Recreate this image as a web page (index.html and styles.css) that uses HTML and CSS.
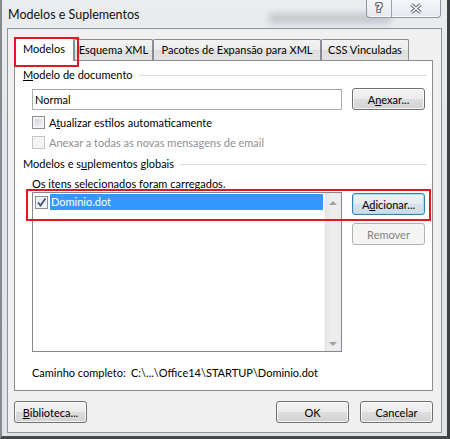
FILE: index.html
```html
<!DOCTYPE html>
<html lang="pt">
<head>
<meta charset="utf-8">
<title>Modelos e Suplementos</title>
<link rel="stylesheet" href="styles.css">
</head>
<body>
<div class="window">
  <div class="titlebar">
    <span class="title">Modelos e Suplementos</span>
    <div class="glass-blur"></div>
    <div class="caption-btns">
      <div class="cap help"><span class="q">?</span></div>
      <div class="cap close">
        <svg width="14" height="11" viewBox="0 0 14 11">
          <path d="M2.5 1.5 L11.5 9.5 M11.5 1.5 L2.5 9.5" stroke="#5e6772" stroke-width="3.4" fill="none"/>
          <path d="M2.5 1.5 L11.5 9.5 M11.5 1.5 L2.5 9.5" stroke="#ffffff" stroke-width="1.4" fill="none"/>
        </svg>
      </div>
    </div>
  </div>
  <div class="client">
    <div class="tabs">
      <div class="tab selected w-mod">Modelos</div>
      <div class="tab w-esq">Esquema XML</div>
      <div class="tab w-pac">Pacotes de Expansão para XML</div>
      <div class="tab w-css">CSS Vinculadas</div>
    </div>
    <div class="panel">
      <div class="group-header h1"><span><u>M</u>odelo de documento</span><i class="rule"></i></div>
      <div class="docrow">
        <div class="textbox">Normal</div>
        <button class="btn">A<u>n</u>exar...</button>
      </div>
      <div class="check-row r1"><span class="chk"></span><span>A<u>t</u>ualizar estilos automaticamente</span></div>
      <div class="check-row disabled"><span class="chk"></span><span>Anexar a todas as novas mensagens de email</span></div>
      <div class="group-header h2"><span>Modelos e s<u>u</u>plementos globais</span><i class="rule"></i></div>
      <div class="note">Os itens selecionados foram carregados.</div>
      <div class="listrow">
        <div class="listbox">
          <div class="items">
            <div class="item">
              <span class="chk checked">
                <svg width="11" height="11" viewBox="0 0 11 11"><path d="M2 5.5 L4.5 8.5 L9.5 1.5" stroke="#3d4f7c" stroke-width="1.8" fill="none"/></svg>
              </span>
              <span class="sel">Dominio.dot</span>
            </div>
          </div>
          <div class="scrollbar">
            <span class="sbtn"><i class="arrow up"></i></span>
            <span class="sbtn"><i class="arrow down"></i></span>
          </div>
        </div>
        <div class="side-btns">
          <button class="btn default">A<u>d</u>icionar...</button>
          <button class="btn disabled">Remover</button>
        </div>
        <div class="callout"></div>
      </div>
      <div class="path"><span class="path-label">Caminho completo:</span><span class="path-val">C:\...\Office14\STARTUP\Dominio.dot</span></div>
    </div>
    <div class="footer">
      <button class="btn"><u>B</u>iblioteca...</button>
      <button class="btn ok">OK</button>
      <button class="btn">Cancelar</button>
    </div>
  </div>
</div>
</body>
</html>
```

FILE: styles.css
```css
* { box-sizing: border-box; }
html, body { margin: 0; padding: 0; background: #4a4a4a; }
body {
  font-family: Lato, "Liberation Sans", sans-serif;
  font-size: 11px;
  color: #000;
}
u { text-underline-offset: 1px; }

.window {
  position: relative;
  width: 450px;
  height: 439px;
  display: flex;
  flex-direction: column;
  border-left: 2px solid #868a8e;
  border-right: 3px solid #3d3f42;
  border-bottom: 3px solid #46484a;
  background: linear-gradient(180deg, #e9edf0 0%, #e0e5e9 40%, #dfe4e8 100%);
}

.titlebar {
  position: relative;
  height: 28px;
  display: flex;
  align-items: flex-start;
  padding-left: 6px;
}
.title {
  margin-top: 7px;
  line-height: 16px;
  font-size: 12.5px;
  color: #111;
}
.glass-blur {
  position: absolute;
  left: 266px;
  top: 13px;
  width: 124px;
  height: 11px;
  border-radius: 6px;
  background: rgba(110, 115, 120, 0.28);
  filter: blur(3px);
}
.caption-btns {
  margin-left: auto;
  margin-right: 6px;
  margin-top: -1px;
  display: flex;
  height: 19px;
  border: 1px solid #8a95a1;
  border-top: none;
  border-radius: 0 0 4px 4px;
  background: linear-gradient(180deg, #f6f8fa, #e4e9ee);
  box-shadow: inset 0 -1px 0 rgba(255,255,255,0.8);
  position: relative;
  z-index: 1;
}
.cap {
  display: flex;
  align-items: center;
  justify-content: center;
}
.help {
  width: 25px;
  border-right: 1px solid #9aa4ae;
}
.close { width: 48px; }
.q {
  font-family: "DejaVu Sans", sans-serif;
  font-weight: bold;
  font-size: 12px;
  color: #fff;
  line-height: 14px;
  text-shadow: 1px 0 #5e6772, -1px 0 #5e6772, 0 1px #5e6772, 0 -1px #5e6772,
               1px 1px #5e6772, -1px -1px #5e6772, 1px -1px #5e6772, -1px 1px #5e6772;
}

.client {
  margin: 0 5px;
  height: 405px;
  border: 1px solid #8d9297;
  background: #f0f0f0;
  padding: 8px 8px 0 6px;
  display: flex;
  flex-direction: column;
}

.tabs {
  display: flex;
  align-items: flex-end;
  height: 23px;
}
.tab {
  height: 21px;
  border: 1px solid #898c95;
  border-bottom: none;
  border-radius: 2px 2px 0 0;
  text-align: center;
  line-height: 20px;
  white-space: nowrap;
  background: linear-gradient(180deg, #f3f3f3 0%, #ebebeb 50%, #dedede 51%, #e3e3e3 100%);
}
.tab.selected {
  position: relative;
  z-index: 1;
  height: 24px;
  margin-bottom: -1px;
  line-height: 22px;
  background: #fff;
}
.tab.selected::after {
  content: "";
  position: absolute;
  left: -1px;
  top: -1px;
  width: 61px;
  height: 26px;
  border: 2px solid #e5161d;
}
.w-mod { width: 60px; }
.w-esq { width: 79px; }
.w-pac { width: 168px; }
.w-css { width: 88px; }

.panel {
  width: 419px;
  height: 331px;
  border: 1px solid #898c95;
  background: #fff;
  display: flex;
  flex-direction: column;
}

.group-header {
  display: flex;
  align-items: center;
  gap: 6px;
  height: 16px;
  line-height: 16px;
  padding: 0 5px 0 8px;
}
.group-header.h1 { margin-top: 6px; }
.group-header.h2 { margin-top: 4px; }
.rule {
  flex: 1;
  height: 1px;
  background: #d5dfe5;
}

.docrow {
  display: flex;
  align-items: flex-start;
  gap: 10px;
  margin-top: 5px;
  padding-left: 17px;
  height: 22px;
}
.textbox {
  width: 310px;
  height: 21px;
  margin-top: 1px;
  border: 1px solid #abadb3;
  border-top-color: #9da2aa;
  padding-left: 2px;
  line-height: 19px;
  background: #fff;
}

.btn {
  width: 73px;
  height: 22px;
  padding: 0;
  font: inherit;
  color: #000;
  border: 1px solid #707070;
  border-radius: 3px;
  background: linear-gradient(180deg, #f3f3f3 0%, #ebebeb 50%, #dddddd 51%, #d2d2d2 100%);
  box-shadow: inset 0 0 0 1px rgba(255,255,255,0.75);
  line-height: 19px;
  text-align: center;
}
.btn.default {
  border-color: #3c7fb1;
  box-shadow: inset 0 0 0 1px #a9dcf5;
  background: linear-gradient(180deg, #edf3f7 0%, #e3ebf1 50%, #d5e2eb 51%, #cddbe6 100%);
}
.btn.disabled {
  border-color: #adb2b5;
  background: #f4f4f4;
  box-shadow: none;
  color: #838383;
}

.check-row {
  display: flex;
  align-items: center;
  gap: 4px;
  height: 20px;
  padding-left: 17px;
}
.check-row.r1 { margin-top: 2px; }
.chk {
  display: inline-flex;
  align-items: center;
  justify-content: center;
  width: 13px;
  height: 13px;
  flex: none;
  border: 1px solid #8e8f8f;
  background: linear-gradient(135deg, #c9cdd3 0%, #e3e5e8 55%, #f7f7f7 100%);
  box-shadow: inset 0 0 0 1px #f4f4f4, inset 0 0 0 2px #f0f0f0;
}
.check-row.disabled { color: #8f8f8f; }
.check-row.disabled .chk {
  border-color: #c5c5c5;
  background: #f4f4f4;
  box-shadow: none;
}

.note {
  margin-top: 4px;
  padding-left: 17px;
  line-height: 16px;
}

.listrow {
  position: relative;
  display: flex;
  gap: 10px;
  padding-left: 17px;
  height: 160px;
}
.listbox {
  width: 310px;
  height: 160px;
  border: 1px solid #828790;
  display: flex;
  background: #fff;
}
.items {
  flex: 1;
  padding-top: 1px;
}
.item {
  display: flex;
  align-items: center;
  height: 16px;
  padding-left: 2px;
}
.chk.checked {
  margin-right: 2px;
  background: linear-gradient(135deg, #dfe2e6 0%, #f3f4f5 60%, #fafafa 100%);
}
.sel {
  flex: 1;
  margin-right: 1px;
  height: 16px;
  line-height: 16px;
  padding-left: 1px;
  background: #3399ff;
  color: #fff;
}
.scrollbar {
  width: 17px;
  display: flex;
  flex-direction: column;
  justify-content: space-between;
  background: linear-gradient(90deg, #e6e6e6, #eeeeee 40%, #ebebeb);
  border-left: 1px solid #f2f2f2;
}
.sbtn {
  height: 16px;
  display: flex;
  align-items: center;
  justify-content: center;
}
.arrow {
  width: 0;
  height: 0;
  border-left: 4px solid transparent;
  border-right: 4px solid transparent;
}
.arrow.up { border-bottom: 4px solid #a2a2a2; margin-top: 3px; }
.arrow.down { border-top: 4px solid #a2a2a2; margin-bottom: -2px; }

.side-btns {
  display: flex;
  flex-direction: column;
  gap: 8px;
  margin-top: 1px;
}
.callout {
  position: absolute;
  left: 11px;
  top: -3px;
  width: 405px;
  height: 32px;
  border: 2px solid #e5161d;
  pointer-events: none;
}

.path {
  margin-top: 13px;
  padding-left: 17px;
  line-height: 16px;
  display: flex;
  white-space: nowrap;
}
.path-label { width: 99px; flex: none; }

.footer {
  display: flex;
  margin-top: 10px;
  gap: 11px;
}
.footer .ok { margin-left: auto; }
```
